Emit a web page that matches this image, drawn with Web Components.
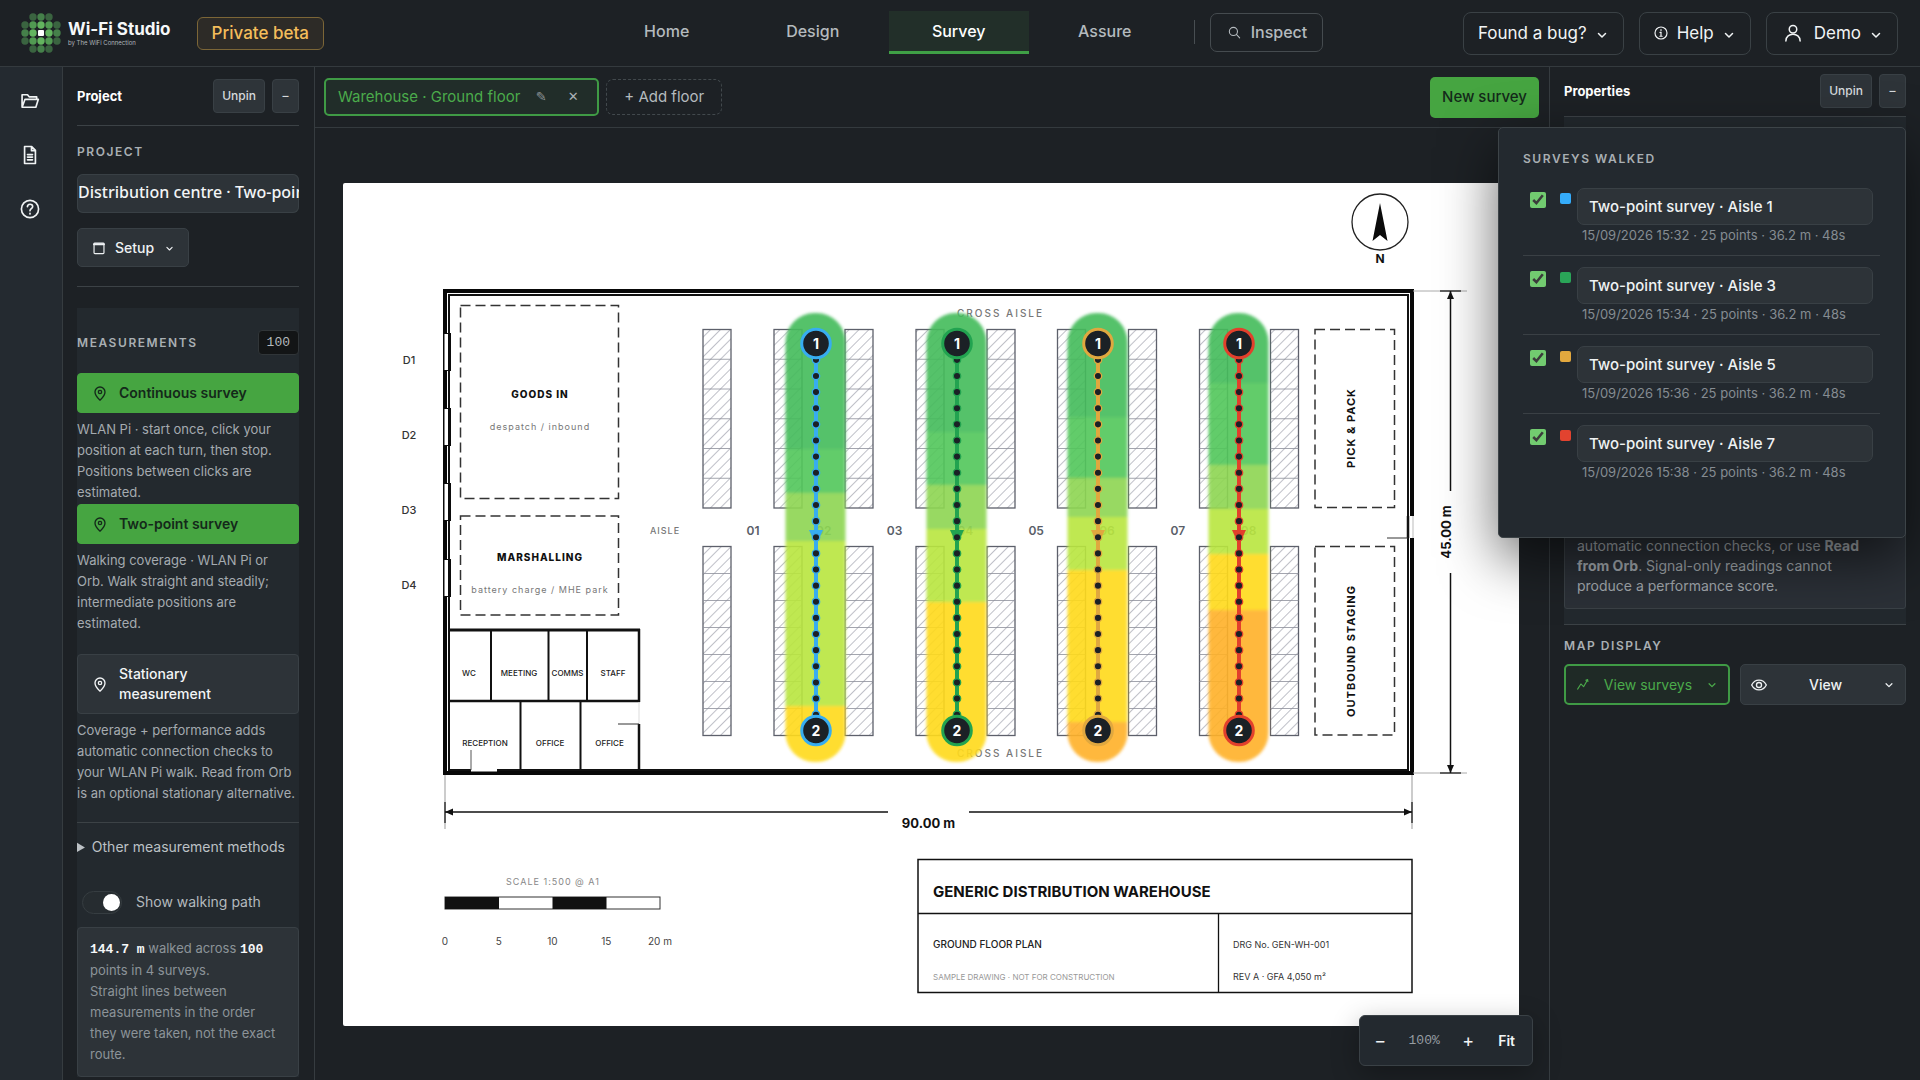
<!DOCTYPE html>
<html lang="en">
<head>
<meta charset="utf-8">
<title>Wi-Fi Studio</title>
<style>
  html, body { margin: 0; height: 100%; }
  body { background: #1d2125; color: #eef1f3; font: 14px/20px Inter, "Liberation Sans", sans-serif; overflow: hidden; }
</style>
</head>
<body>
<wifi-studio></wifi-studio>
<script>
const BASE = `
  :host, *, *::before, *::after { box-sizing: border-box; }
  button, input { font: inherit; color: inherit; margin: 0; }
  button { cursor: pointer; }
  p { margin: 0; }
  h2, h3 { margin: 0; }
`;

function define(name, render) {
  customElements.define(name, class extends HTMLElement {
    connectedCallback() {
      if (this.shadowRoot) return;
      const t = document.createElement('template');
      t.innerHTML = render(this);
      this.attachShadow({ mode: 'open' }).append(t.content);
    }
  });
}

/* ---------- icons ---------- */
const ICONS = {
  folder: '<path d="M2.500 19V4.500h6.500l2 2.500h9v3M2.500 19.500 6 10h16l-3 9.500z"/>',
  file: '<path d="M5.500 1.800h8.500l4.500 4.700v15.700h-13zM13.800 2v4.800h4.500M9 11.500h6M9 14.500h6M9 17.800h6"/>',
  question: '<circle cx="12" cy="12" r="10.300"/><path d="M8.900 9.300c0-4 6.300-4 6.300-.3 0 2.600-3.200 2.600-3.200 5.200M12 17.100v1"/>',
  pin: '<path d="M12 22s7.500-6.800 7.500-12.300a7.500 7.500 0 0 0-15 0C4.500 15.200 12 22 12 22z"/><circle cx="12" cy="9.700" r="2.500"/>',
  box: '<rect x="3.500" y="3.500" width="17" height="18" rx="1.500"/><path d="M3.500 5.500h17" stroke-width="3.500"/>',
  chevron: '<path d="m5 9 7 7 7-7"/>',
  search: '<circle cx="10" cy="10" r="7.500"/><path d="m15.500 15.500 6 6.500"/>',
  info: '<circle cx="12" cy="12" r="10.300"/><path d="M12 10.500V17.500M10.300 11h2M10 17.500h4M12 6.200v1.300"/>',
  user: '<circle cx="12" cy="7" r="5"/><path d="M2.500 22.500c0-12 19-12 19 0"/>',
  trend: '<path d="M3 20.500 9 11l5 5 7.500-13M18 4l3.500-1.200.5 3.600"/>',
  eye: '<path d="M1 12c5-9.700 17-9.700 22 0-5 9.700-17 9.700-22 0z"/><circle cx="12" cy="12" r="3.800"/>'
};
define('ws-icon', el => `<style>
  :host { display: inline-flex; flex: none; width: 16px; height: 16px; }
  svg { width: 100%; height: 100%; overflow: visible; fill: none; stroke: currentColor; stroke-width: var(--stroke, 2); stroke-linecap: round; stroke-linejoin: round; }
</style><svg viewBox="0 0 24 24" aria-hidden="true">${ICONS[el.getAttribute('name')]}</svg>`);

/* ---------- brand ---------- */
define('ws-logo', () => {
  let dots = '';
  for (let r = 0; r < 5; r++) for (let c = 0; c < 5; c++) {
    const d = Math.abs(r - 2) + Math.abs(c - 2);
    if (d > 3) continue;
    const fill = d === 1 ? '#63b45f' : d === 2 && Math.abs(r - 2) === 1 ? '#519a52' : d === 2 ? '#45804a' : '#3a6440';
    dots += d === 0 ? '<rect x="17" y="17" width="6" height="6" rx="1" fill="#fff"/>'
      : `<circle cx="${4 + c * 8}" cy="${4 + r * 8}" r="3.700" fill="${fill}"/>`;
  }
  return `<style>${BASE}
    :host { display: flex; align-items: center; gap: 7px; }
    svg { width: 40px; height: 40px; }
    strong { display: block; font-size: 17px; line-height: 20px; font-weight: 700; color: #f6f8f9; }
    small { display: block; font-size: 6px; line-height: 8px; color: #aeb5ba; }
  </style><svg viewBox="0 0 40 40" aria-hidden="true">${dots}</svg>
  <span><strong>Wi-Fi Studio</strong><small>by The WiFi Connection</small></span>`;
});

define('nav-tab', () => `<style>${BASE}
  :host { display: block; width: 140px; }
  a { display: flex; height: 43px; align-items: center; justify-content: center; color: #b4babe; font-size: 16px; line-height: 20px; font-weight: 500; text-decoration: none; border-bottom: 3px solid transparent; }
  :host([current]) a { color: #fff; background: #222f29; border-color: #3fa046; }
</style><a href="#"><slot></slot></a>`);

define('header-menu', () => `<style>${BASE}
  :host { display: block; }
  button { display: flex; align-items: center; gap: 9px; height: 43px; padding: 0 14px; background: none; border: 1px solid #3a4145; border-radius: 8px; font-size: 17px; line-height: 20px; color: #f1f4f5; }
  .chev { width: 12px; height: 12px; margin: 4px 1px 0 0; --stroke: 3; }
</style><button type="button"><slot name="icon"></slot><slot></slot><ws-icon class="chev" name="chevron"></ws-icon></button>`);

define('app-header', () => `<style>${BASE}
  :host { display: grid; flex: none; grid-template-columns: 1fr auto 1fr; height: 67px; border-bottom: 1px solid #343a3e; background: #1d2125; }
  .left { display: flex; align-items: center; gap: 26px; padding-left: 21px; }
  .beta { height: 33px; padding: 0 14px; border: 1px solid #7c6637; border-radius: 6px; background: #2d2b27; color: #f4bd5b; font-size: 17px; line-height: 31px; font-weight: 500; }
  nav { display: flex; align-items: center; gap: 6px; padding-bottom: 2px; }
  .rule { width: 1px; height: 24px; margin: 0 9px 0 13px; background: #484e52; }
  .inspect { display: flex; align-items: center; gap: 10px; height: 39px; padding: 0 15px 0 17px; border: 1px solid #454b4f; border-radius: 7px; background: none; color: #b4babe; font-size: 16px; font-weight: 500; }
  .inspect ws-icon { width: 13px; height: 13px; }
  .right { display: flex; align-items: center; justify-content: flex-end; gap: 15px; padding-right: 22px; }
  .info { width: 14px; height: 14px; }
  .user { width: 18px; height: 18px; margin: 0 3px; }
</style>
<div class="left"><ws-logo></ws-logo><span class="beta">Private beta</span></div>
<nav aria-label="Main"><nav-tab>Home</nav-tab><nav-tab>Design</nav-tab><nav-tab current>Survey</nav-tab><nav-tab>Assure</nav-tab>
<span class="rule"></span><button class="inspect" type="button"><ws-icon name="search"></ws-icon>Inspect</button></nav>
<div class="right"><header-menu>Found a bug?</header-menu>
<header-menu><ws-icon class="info" slot="icon" name="info"></ws-icon>Help</header-menu>
<header-menu><ws-icon class="user" slot="icon" name="user"></ws-icon>Demo</header-menu></div>`);

/* ---------- side rail ---------- */
define('side-rail', () => `<style>${BASE}
  :host { display: flex; flex: none; flex-direction: column; align-items: center; gap: 30px; width: 63px; padding: 22px 2px 0 0; background: #242a30; border-right: 1px solid #363c40; }
  button { display: flex; padding: 2px; background: none; border: 0; color: #f0f3f4; }
  ws-icon { width: 20px; height: 20px; }
</style>
<button type="button" aria-label="Projects"><ws-icon name="folder"></ws-icon></button>
<button type="button" aria-label="Documents"><ws-icon name="file"></ws-icon></button>
<button type="button" aria-label="Help"><ws-icon name="question"></ws-icon></button>`);

/* ---------- shared panel pieces ---------- */
define('panel-header', () => `<style>${BASE}
  :host { display: flex; align-items: center; gap: 7px; border-bottom: 1px solid #3c4246; }
  h2 { flex: 1; font-size: 13px; line-height: 20px; font-weight: 700; color: #fff; }
  button { height: 34px; padding: 0 8px; border: 1px solid #394045; border-radius: 4px; background: #2e3439; color: #d5d9dc; font-size: 12px; line-height: 16px; font-weight: 500; }
  button + button { width: 27px; padding: 0; }
</style><h2><slot></slot></h2><button type="button">Unpin</button><button type="button" aria-label="Collapse">–</button>`);

define('section-label', () => `<style>
  :host { display: block; font-size: 12px; line-height: 16px; font-weight: 600; letter-spacing: .13em; text-transform: uppercase; color: #a9afb3; }
</style><slot></slot>`);

define('measure-action', el => `<style>${BASE}
  :host { display: block; }
  button { display: flex; align-items: center; gap: 11px; width: 100%; min-height: 40px; padding: 9px 14px; border: 1px solid #394045; border-radius: 4px; background: #2d3338; color: #f3f5f6; text-align: left; font-size: 14px; line-height: 20px; font-weight: 500; }
  :host([primary]) button { background: #46a541; border-color: #46a541; color: #14291a; font-weight: 600; }
  ws-icon { width: 16px; height: 17px; }
  p { margin-top: 6px; padding-right: 4px; font-size: 13px; line-height: 21px; color: #a5abb0; }
</style><button type="button"><ws-icon name="pin"></ws-icon><span>${el.getAttribute('title-text')}</span></button><p><slot></slot></p>`);

define('project-panel', () => `<style>${BASE}
  :host { display: block; flex: none; width: 252px; padding: 12px 15px 0 14px; border-right: 1px solid #363c40; overflow: hidden; }
  panel-header { padding-bottom: 12px; margin-bottom: 18px; }
  .name { display: block; width: 100%; height: 39px; margin-top: 14px; padding: 0 0 3px 1px; border: 0; border-radius: 6px; box-shadow: inset 0 0 0 1px #394045; background: #2d3338; font: 500 16px/20px "Noto Sans", sans-serif; color: #f3f5f6; }
  .setup { display: flex; align-items: center; gap: 9px; height: 39px; margin: 15px 0 19px; padding: 0 14px; border: 1px solid #394045; border-radius: 5px; background: #2d3338; font-size: 14px; line-height: 20px; font-weight: 500; }
  .setup ws-icon { width: 14px; height: 14px; }
  .setup ws-icon:last-child { width: 9px; height: 9px; --stroke: 3; margin: 1px 0 0 2px; }
  section { margin-top: 21px; padding-top: 22px; background: #23292e; }
  .rule { height: 1px; background: #3c4246; }
  .row { display: flex; align-items: center; justify-content: space-between; height: 25px; margin-bottom: 18px; }
  .count { padding: 0 8px; border: 1px solid #303538; border-radius: 4px; background: #131516; color: #b5babd; font: 13px/23px "Liberation Mono", monospace; }
  measure-action + measure-action { margin-top: 1px; }
  measure-action.still { margin-top: 20px; margin-bottom: 18px; }
  details { padding: 14px 0 33px; }
  summary { font-size: 14px; line-height: 20px; color: #bcc1c5; }
  .toggle { display: flex; align-items: center; gap: 14px; height: 24px; padding-left: 5px; margin-bottom: 13px; font-size: 14px; color: #b4babe; }
  .toggle input { appearance: none; width: 40px; height: 23px; padding: 2px; border: 1px solid #363d41; border-radius: 12px; background: #262c30; }
  .toggle input::before { content: ""; display: block; width: 17px; height: 17px; margin-left: 18px; border-radius: 50%; background: #fff; }
  .stats { padding: 10px 16px 11px 12px; border: 1px solid #394045; border-radius: 4px; background: #2d3338; font-size: 13px; line-height: 21px; color: #8c9398; }
  .stats b { font: 700 13px/20px "Liberation Mono", monospace; color: #f6f8f9; }
</style>
<panel-header>Project</panel-header>
<section-label>Project</section-label>
<input class="name" aria-label="Project name" value="Distribution centre · Two-point">
<button class="setup" type="button"><ws-icon name="box"></ws-icon>Setup<ws-icon name="chevron"></ws-icon></button>
<div class="rule"></div>
<section>
  <div class="row"><section-label>Measurements</section-label><span class="count">100</span></div>
  <measure-action primary title-text="Continuous survey">WLAN Pi · start once, click your position at each turn, then stop. Positions between clicks are estimated.</measure-action>
  <measure-action primary title-text="Two-point survey">Walking coverage · WLAN Pi or Orb. Walk straight and steadily; intermediate positions are estimated.</measure-action>
  <measure-action class="still" title-text="Stationary<br>measurement">Coverage + performance adds automatic connection checks to your WLAN Pi walk. Read from Orb is an optional stationary alternative.</measure-action>
  <div class="rule"></div>
  <details><summary>Other measurement methods</summary></details>
  <label class="toggle"><input type="checkbox" role="switch" checked>Show walking path</label>
  <div class="stats"><b>144.7 m</b> walked across <b>100</b><br>points in 4 surveys.<br>Straight lines between measurements in the order<br>they were taken, not the exact route.</div>
</section>`);

/* ---------- floor plan drawing ---------- */
function planMarkup() {
  const o = [];
  const line = (x1, y1, x2, y2, w = 1, c = '#111') => o.push(`<path d="M${x1} ${y1}L${x2} ${y2}" stroke="${c}" stroke-width="${w}" fill="none"/>`);
  const rect = (x, y, w, h, sw, c = '#111', f = 'none', extra = '') => o.push(`<rect x="${x}" y="${y}" width="${w}" height="${h}" stroke="${c}" stroke-width="${sw}" fill="${f}" ${extra}/>`);
  const text = (x, y, s, t, { w = 400, c = '#222', ls = 0, a = 'middle', rot = 0 } = {}) => {
    const pos = rot ? `transform="translate(${x} ${y}) rotate(-90)"` : `x="${x}" y="${y}"`;
    o.push(`<text ${pos} font-size="${s}" font-weight="${w}" fill="${c}" letter-spacing="${ls}" text-anchor="${a}">${t}</text>`);
  };
  // compass
  o.push('<circle cx="1380" cy="222" r="28" fill="none" stroke="#222" stroke-width="1.300"/><path d="M1380 203l7.500 38-7.500-6-7.500 6z" fill="#0b0b0b"/>');
  text(1380, 263, 12, 'N', { w: 700, c: '#111' });
  // outer walls
  rect(445, 291, 967, 482, 4, '#080808');
  rect(449, 295, 959, 475, 2);
  // dock doors
  [333, 408, 483, 559].forEach((y, i) => {
    o.push(`<rect x="443" y="${y}" width="8" height="38" fill="#0b0b0b"/><rect x="444.500" y="${y + 1}" width="3.500" height="36" fill="#fff"/>`);
    text(409, 364 + i * 75, 11, 'D' + (i + 1), { c: '#333', w: 500 });
  });
  // zones
  const dash = 'stroke-dasharray="10 5"';
  rect(460.5, 305.5, 158, 193, 1.5, '#333', 'none', dash);
  rect(460.5, 516, 158, 99, 1.5, '#333', 'none', dash);
  rect(1315, 329.5, 79.5, 178, 1.5, '#333', 'none', dash);
  rect(1315, 546.5, 79.5, 188.5, 1.5, '#333', 'none', dash);
  text(540, 398, 10, 'GOODS IN', { w: 800, c: '#111', ls: 1 });
  text(540, 430, 9, 'despatch / inbound', { c: '#777', ls: 1 });
  text(540, 561, 10, 'MARSHALLING', { w: 800, c: '#111', ls: 1 });
  text(540, 593, 9, 'battery charge / MHE park', { c: '#777', ls: 1 });
  text(1355, 428, 11, 'PICK &amp; PACK', { w: 700, c: '#111', ls: 1, rot: 1 });
  text(1355, 651, 11, 'OUTBOUND STAGING', { w: 700, c: '#111', ls: 1, rot: 1 });
  // offices
  line(449, 630, 640, 630, 3); line(449, 701, 640, 701, 2.5);
  line(639, 629, 639, 702, 2.5); line(639, 724, 639, 770, 2.5); line(639, 702, 639, 724, 1, '#ddd');
  line(618, 724, 639, 724, 1, '#333');
  [491, 548.5, 587].forEach(x => line(x, 630, x, 701, 2));
  [520.5, 580.5].forEach(x => line(x, 701, x, 770, 2));
  line(471, 770, 497, 770, 3, '#fff'); line(471, 750, 471, 770, 1, '#555');
  [[469, 'WC'], [519, 'MEETING'], [567.5, 'COMMS'], [613, 'STAFF']].forEach(([x, t]) => text(x, 676, 8, t, { w: 500, c: '#222' }));
  [[485, 'RECEPTION'], [550, 'OFFICE'], [609.5, 'OFFICE']].forEach(([x, t]) => text(x, 746, 8, t, { w: 500, c: '#222' }));
  // racks
  [703, 774, 845, 916, 987, 1057.5, 1128.5, 1199.5, 1270.5].forEach(x => {
    [[329.5, 178.5, 6], [546.5, 189, 7]].forEach(([y, h, n]) => {
      rect(x, y, 28, h, 1.3, '#5d606b', 'url(#hatch)');
      for (let i = 1; i < n; i++) line(x, y + h / n * i, x + 28, y + h / n * i, 0.8, '#8b8e99');
    });
  });
  text(665, 534, 9, 'AISLE', { c: '#777', w: 500, ls: 1 });
  ['01', '02', '03', '04', '05', '06', '07', '08'].forEach((t, i) => text(753 + i * 70.8, 535, 12, t, { w: 600, c: '#595e68' }));
  text(957, 317, 10, 'CROSS AISLE', { c: '#777', w: 500, ls: 2, a: 'start' });
  text(957, 757, 10, 'CROSS AISLE', { c: '#777', w: 500, ls: 2, a: 'start' });
  // east door
  o.push('<rect x="1409" y="516" width="5" height="22" fill="#fff"/>');
  line(1413, 516, 1413, 538, 1, '#bbb'); line(1408, 516, 1408, 538, 2.5); line(1387, 538, 1408, 538, 1, '#333');
  // dimensions
  [291, 773].forEach(y => { line(1413, y, 1467, y, 1, '#aaa'); line(1440, y, 1461, y, 1.2); });
  line(1450.5, 291, 1450.5, 491, 1.5); line(1450.5, 573, 1450.5, 773, 1.5);
  o.push('<path d="M1450.500 291l3.500 8h-7zM1450.500 773l3.500-8h-7zM445 812l8-3.500v7zM1412 812l-8-3.500v7z" fill="#111"/>');
  text(1451, 532, 13, '45.00 m', { w: 700, c: '#111', rot: 1 });
  [445, 1412].forEach(x => { line(x, 775, x, 829, 1, '#999'); line(x, 802, x, 823, 1.2); });
  line(445, 812, 888, 812, 1.5); line(969, 812, 1412, 812, 1.5);
  text(928.5, 828, 13, '90.00 m', { w: 700, c: '#111' });
  // scale bar
  text(553, 885, 9, 'SCALE 1:500 @ A1', { c: '#888', ls: 1 });
  rect(445, 897, 215, 12, 1, '#333'); rect(445, 897, 54, 12, 0, '#111', '#111'); rect(552.5, 897, 54, 12, 0, '#111', '#111');
  ['0', '5', '10', '15', '20 m'].forEach((t, i) => text(445 + i * 53.75, 945, 10, t, { c: '#444' }));
  // title block
  rect(918, 859.5, 494, 133, 1.5); line(918, 913.5, 1412, 913.5, 1.3); line(1218.5, 913.5, 1218.5, 992, 1.3);
  text(933, 897, 15, 'GENERIC DISTRIBUTION WAREHOUSE', { w: 700, c: '#111', a: 'start' });
  text(933, 948, 10, 'GROUND FLOOR PLAN', { w: 500, c: '#222', a: 'start' });
  text(933, 980, 8, 'SAMPLE DRAWING · NOT FOR CONSTRUCTION', { c: '#999', a: 'start' });
  text(1233, 948, 9, 'DRG No. GEN-WH-001', { c: '#333', a: 'start' });
  text(1233, 980, 9, 'REV A · GFA 4,050 m²', { c: '#333', a: 'start' });
  // survey walks: signal bands, path, samples and end markers
  const G1 = '#45bc5b', G2 = '#52c75c', LG = '#8ed653', LI = '#b9e63f', Y = '#ffda1c', O = '#ffb22c';
  const walks = [
    [816, '#37adf0', [[G1, 449], [G2, 493], [LG, 541], [LI, 706], [Y, 763]]],
    [957, '#22a350', [[G1, 432], [G2, 485], [LG, 529], [LI, 602], [Y, 763]]],
    [1098, '#e0a83f', [[G1, 417], [G2, 478], [LG, 517], [LI, 570], [Y, 722], [O, 763]]],
    [1239, '#e2402c', [[G1, 383], [G2, 465], [LG, 509], [LI, 554], [Y, 610], [O, 763]]]
  ];
  walks.forEach(([x, c, bands], k) => {
    let top = 313;
    const cx = x - 0.5;
    o.push(`<clipPath id="lane${k}"><rect x="${cx - 30}" y="313" width="60" height="449" rx="29"/></clipPath><g filter="url(#soft)" opacity=".91"><g clip-path="url(#lane${k})">`);
    bands.forEach(([f, b]) => { o.push(`<rect x="${cx - 31}" y="${top}" width="62" height="${b - top}" fill="${f}"/>`); top = b; });
    o.push('</g></g>');
    line(x, 344, x, 731, 4, c);
    o.push(`<path d="M${x - 7} 530h14l-5 11h-4z" fill="${c}"/>`);
    for (let i = 1; i < 24; i++) o.push(`<circle cx="${x}" cy="${343.7 + 16.13 * i}" r="3.700" fill="#1b2126" stroke="${c}" stroke-width="1.300"/>`);
    [[343.5, '1'], [730.5, '2']].forEach(([y, t]) => {
      o.push(`<circle cx="${x}" cy="${y}" r="14.300" fill="#1b2126" stroke="${c}" stroke-width="3"/>`);
      text(x, y + 5, 14, t, { w: 700, c: '#fff' });
    });
  });
  return o.join('');
}
define('floor-plan', () => `<style>
  :host { display: block; background: #fff; border-radius: 2px; overflow: hidden; }
  svg { display: block; width: 100%; height: auto; font-family: Inter, "Liberation Sans", sans-serif; }
</style><svg viewBox="343 183 1176 843" role="img" aria-label="Warehouse ground floor">
<defs><pattern id="hatch" width="7" height="7" patternUnits="userSpaceOnUse" patternTransform="rotate(45)"><path d="M0 0V7" stroke="#a9abb5" stroke-width="1.500"/></pattern>
<filter id="soft" x="-20%" y="-5%" width="140%" height="110%"><feGaussianBlur stdDeviation="1.500"/></filter></defs>
${planMarkup()}</svg>`);

define('zoom-bar', () => `<style>${BASE}
  :host { display: flex; align-items: center; gap: 8px; height: 51px; padding: 0 9px; border: 1px solid #3a4146; border-radius: 6px; background: #23292f; box-shadow: 0 8px 28px rgba(0,0,0,.3); }
  button { min-width: 22px; height: 30px; padding: 0; border: 0; background: none; font-size: 18px; line-height: 30px; color: #f1f4f5; }
  button.fit { padding: 0 8px; margin-left: 3px; font-size: 14px; font-weight: 600; }
  output { width: 50px; text-align: center; font: 13px/20px "Liberation Mono", monospace; color: #969da2; }
</style><button type="button" aria-label="Zoom out">−</button><output>100%</output><button type="button" aria-label="Zoom in">+</button><button class="fit" type="button">Fit</button>`);

define('plan-workspace', () => `<style>${BASE}
  :host { display: flex; flex: 1; min-width: 0; flex-direction: column; position: relative; }
  .bar { display: flex; flex: none; align-items: center; gap: 7px; height: 61px; padding: 0 10px 0 9px; border-bottom: 1px solid #343a3e; }
  .floor { display: flex; align-items: center; height: 38px; padding: 0 16px 0 12px; border: 2px solid #3f9a45; border-radius: 5px; background: #212d29; }
  .floor button { padding: 0; border: 0; background: none; color: #a9b0b4; font-size: 15px; line-height: 20px; }
  .floor .name { margin-right: 14px; color: #4bab4b; }
  .floor .edit { width: 14px; margin-right: 17px; font: 13px/20px "DejaVu Sans", sans-serif; color: #8d9498; }
  .floor .close { width: 16px; font: 13px/20px "DejaVu Sans", sans-serif; }
  .add { height: 36px; padding: 0 17px; border: 1px dashed #42494d; border-radius: 7px; background: none; color: #b4babe; font-size: 15px; line-height: 20px; }
  .new { height: 41px; margin-left: auto; padding: 0 12px; border: 0; border-radius: 5px; background: #46a541; color: #14291a; font-size: 15px; font-weight: 500; }
  .stage { flex: 1; min-height: 0; padding: 55px 30px 0 28px; overflow: hidden; }
  zoom-bar { position: absolute; right: 16px; bottom: 14px; }
</style>
<div class="bar"><div class="floor"><button class="name" type="button">Warehouse · Ground floor</button><button class="edit" type="button" aria-label="Rename floor">✎</button><button class="close" type="button" aria-label="Close floor">✕</button></div>
<button class="add" type="button">+ Add floor</button><button class="new" type="button">New survey</button></div>
<div class="stage"><floor-plan></floor-plan></div><zoom-bar></zoom-bar>`);

/* ---------- surveys popover ---------- */
define('survey-row', el => `<style>${BASE}
  :host { display: grid; grid-template-columns: 16px 11px 1fr; column-gap: 14px; padding: 11px 7px 12px; height: 79px; align-items: start; }
  .check { width: 16px; height: 16px; margin-top: 4px; accent-color: #72cb70; }
  i { width: 11px; height: 11px; margin-top: 5px; border-radius: 2px; background: ${el.getAttribute('colour')}; }
  .body { margin-left: -8px; }
  .name { display: block; width: 100%; height: 37px; padding: 0 11px; border: 1px solid #394045; border-radius: 7px; background: #2d3338; font-size: 15px; line-height: 20px; font-weight: 500; color: #eff2f3; }
  p { padding-left: 5px; font-size: 13px; line-height: 20px; color: #858c92; }
</style><input class="check" type="checkbox" checked aria-label="Show Aisle ${el.getAttribute('aisle')}"><i></i>
<div class="body"><input class="name" aria-label="Survey name" value="Two-point survey · Aisle ${el.getAttribute('aisle')}"><p><slot></slot></p></div>`);

define('surveys-popover', () => `<style>${BASE}
  :host { display: block; width: 408px; height: 411px; padding: 23px 24px; border: 1px solid #3d4448; border-radius: 5px; background: #23292f; box-shadow: 0 20px 56px rgba(0,0,0,.6); }
  .list { margin: 10px 1px 0 0; }
  survey-row:not(:last-child) { border-bottom: 1px solid #3a4045; }
</style><section-label>Surveys walked</section-label><div class="list">
<survey-row colour="#35acfb" aisle="1">15/09/2026 15:32 · 25 points · 36.2 m · 48s</survey-row>
<survey-row colour="#2aa558" aisle="3">15/09/2026 15:34 · 25 points · 36.2 m · 48s</survey-row>
<survey-row colour="#e2a83e" aisle="5">15/09/2026 15:36 · 25 points · 36.2 m · 48s</survey-row>
<survey-row colour="#e2432f" aisle="7">15/09/2026 15:38 · 25 points · 36.2 m · 48s</survey-row></div>`);

define('properties-panel', () => `<style>${BASE}
  :host { display: block; flex: none; position: relative; z-index: 1; width: 371px; padding: 7px 14px 0; border-left: 1px solid #363c40; }
  panel-header { padding-bottom: 8px; }
  .info { display: flex; flex-direction: column; height: 508px; padding: 15px 0; background: #23292e; border-bottom: 1px solid #3c4246; }
  .note { display: flex; flex: 1; align-items: flex-end; padding: 0 32px 12px 12px; border: 1px solid #3a4146; border-radius: 3px; background: #2b3037; font-size: 14px; line-height: 20px; color: #a3a9ae; }
  section-label { margin: 13px 0 10px; }
  .views { display: grid; grid-template-columns: 1fr 1fr; gap: 10px; }
  .views button { display: flex; align-items: center; justify-content: space-between; height: 41px; padding: 0 11px 0 10px; border: 1px solid #394045; border-radius: 5px; background: #2d3338; font-size: 14px; font-weight: 500; }
  .views .on { border: 2px solid #3f9a45; background: #1f2a26; color: #4bab4b; font-weight: 400; }
  .views .chev { width: 10px; height: 10px; --stroke: 3; }
  .trend { width: 13px; height: 13px; }
  surveys-popover { position: absolute; right: 14px; top: 60px; }
</style>
<panel-header>Properties</panel-header>
<div class="info"><div class="note"><p>automatic connection checks, or use <b>Read from Orb</b>. Signal-only readings cannot produce a performance score.</p></div></div>
<section-label>Map display</section-label>
<div class="views"><button class="on" type="button"><ws-icon class="trend" name="trend"></ws-icon>View surveys<ws-icon class="chev" name="chevron"></ws-icon></button>
<button type="button"><ws-icon name="eye"></ws-icon>View<ws-icon class="chev" name="chevron"></ws-icon></button></div>
<surveys-popover></surveys-popover>`);

define('wifi-studio', () => `<style>
  :host { display: flex; flex-direction: column; height: 100vh; }
  main { display: flex; flex: 1; min-height: 0; }
</style><app-header></app-header><main><side-rail></side-rail><project-panel></project-panel><plan-workspace></plan-workspace><properties-panel></properties-panel></main>`);
</script>
</body>
</html>
